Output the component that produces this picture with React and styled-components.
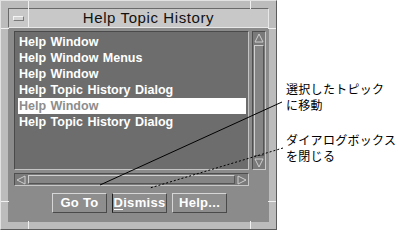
import React from "react";
import styled, { createGlobalStyle } from "styled-components";

const Global = createGlobalStyle`
  html, body { margin: 0; padding: 0; background: #ffffff; }
  body { font-family: "Liberation Sans", Arial, sans-serif; }
`;

const Page = styled.div`
  position: relative;
  width: 399px;
  height: 230px;
  display: flex;
  align-items: flex-start;
  overflow: hidden;
`;

const Window = styled.div`
  position: relative;
  box-sizing: border-box;
  width: 277px;
  height: 230px;
  flex: none;
  padding: 7px;
  background: #bcbcbc;
  border: 1px solid;
  border-color: #e2e2e2 #5c5c5c #5c5c5c #e2e2e2;
  display: flex;
  flex-direction: column;
`;

const Tick = styled.div`
  position: absolute;
  background: #f0f0f0;
  ${(p) => (p.$v ? "width: 1px; height: 8px;" : "width: 8px; height: 1px;")}
`;

const TitleBar = styled.div`
  height: 20px;
  display: flex;
  background: #c8c8c8;
  border: 1px solid;
  border-color: #6a6a6a #e8e8e8 #e8e8e8 #6a6a6a;
  box-sizing: border-box;
`;

const MenuButton = styled.div`
  width: 19px;
  flex: none;
  display: flex;
  align-items: center;
  justify-content: center;
  border-right: 1px solid #efefef;
  &::after {
    content: "";
    width: 9px;
    height: 3px;
    background: #d4d4d4;
    border: 1px solid;
    border-color: #f4f4f4 #7a7a7a #7a7a7a #f4f4f4;
  }
`;

const Title = styled.div`
  flex: 1;
  text-align: center;
  font-size: 15px;
  line-height: 18px;
  color: #111;
  letter-spacing: 0.6px;
`;

const Body = styled.div`
  flex: 1;
  background: #8b8b8b;
  box-sizing: border-box;
  padding: 3px 0 0 6px;
  display: flex;
  flex-direction: column;
`;

const ScrollGrid = styled.div`
  display: grid;
  grid-template-columns: 235px 14px;
  grid-template-rows: 139px 13px;
  column-gap: 3px;
  row-gap: 3px;
`;

const List = styled.ul`
  margin: 0;
  padding: 2px 2px 0 3px;
  list-style: none;
  background: #6d6d6d;
  border: 1px solid;
  border-color: #4a4a4a #c4c4c4 #c4c4c4 #4a4a4a;
  box-sizing: border-box;
  overflow: hidden;
`;

const Item = styled.li`
  height: 16px;
  line-height: 16px;
  font-size: 12.5px;
  font-weight: bold;
  word-spacing: 1px;
  padding-left: 1px;
  white-space: nowrap;
  color: ${(p) => (p.$selected ? "#8d8d8d" : "#ffffff")};
  background: ${(p) => (p.$selected ? "#ffffff" : "transparent")};
`;

const VTrack = styled.div`
  background: #7a7a7a;
  border: 1px solid;
  border-color: #4f4f4f #c8c8c8 #c8c8c8 #4f4f4f;
  box-sizing: border-box;
  display: flex;
  flex-direction: column;
`;

const HTrack = styled(VTrack)`
  flex-direction: row;
  grid-column: 1;
`;

const Arrow = styled.div`
  flex: none;
  width: ${(p) => (p.$h ? "12px" : "auto")};
  height: ${(p) => (p.$h ? "auto" : "12px")};
  display: flex;
  align-items: center;
  justify-content: center;
`;

const Thumb = styled.div`
  flex: 1;
  margin: 1px;
  background: #858585;
  border: 1px solid;
  border-color: #d0d0d0 #555 #555 #d0d0d0;
`;

const ButtonRow = styled.div`
  display: flex;
  justify-content: center;
  gap: 5px;
  margin-top: 7px;
  width: 251px;
`;

const Button = styled.div`
  width: 55px;
  height: 20px;
  box-sizing: border-box;
  display: flex;
  align-items: center;
  justify-content: center;
  background: #8e8e8e;
  border: 1px solid;
  border-color: ${(p) =>
    p.$focus ? "#d6d6d6 #4a4a4a #4a4a4a #1e1e1e" : "#d6d6d6 #4a4a4a #4a4a4a #d6d6d6"};
  color: #ffffff;
  font-size: 13px;
  font-weight: bold;
  letter-spacing: 0.3px;
`;

const Label = styled.span`
  line-height: 16px;
  white-space: nowrap;
`;

const Mnemonic = styled.span`
  display: inline-block;
  line-height: 13px;
  border-bottom: 1px solid #ffffff;
`;

const Notes = styled.div`
  flex: 1;
  padding: 81px 0 0 9px;
  display: flex;
  flex-direction: column;
  gap: 19px;
`;

const Note = styled.div`
  font-family: "Noto Sans CJK JP", sans-serif;
  font-size: 12px;
  line-height: 16px;
  letter-spacing: 0.3px;
  color: #000;
  white-space: nowrap;
`;

const Leaders = styled.svg`
  position: absolute;
  left: 0;
  top: 0;
  pointer-events: none;
`;

const Tri = ({ dir }) => {
  const pts = {
    up: "1,9 5,1 9,9",
    down: "1,1 5,9 9,1",
    left: "9,1 1,5 9,9",
    right: "1,1 9,5 1,9",
  }[dir];
  return (
    <svg width="10" height="10" viewBox="0 0 10 10">
      <polygon points={pts} fill="#7a7a7a" stroke="#cfcfcf" strokeWidth="1" />
    </svg>
  );
};

const items = [
  "Help Window",
  "Help Window Menus",
  "Help Window",
  "Help Topic History Dialog",
  "Help Window",
  "Help Topic History Dialog",
];

export default function App() {
  return (
    <>
      <Global />
      <Page>
        <Window>
          <Tick $v style={{ left: 27, top: 0 }} />
          <Tick $v style={{ left: 249, top: 0 }} />
          <Tick $v style={{ left: 27, bottom: 0 }} />
          <Tick $v style={{ left: 249, bottom: 0 }} />
          <Tick style={{ left: 0, top: 27 }} />
          <Tick style={{ right: 0, top: 27 }} />
          <Tick style={{ left: 0, bottom: 27 }} />
          <Tick style={{ right: 0, bottom: 27 }} />
          <TitleBar>
            <MenuButton />
            <Title>Help Topic History</Title>
          </TitleBar>
          <Body>
            <ScrollGrid>
              <List>
                {items.map((t, i) => (
                  <Item key={i} $selected={i === 4}>
                    {t}
                  </Item>
                ))}
              </List>
              <VTrack>
                <Arrow><Tri dir="up" /></Arrow>
                <Thumb />
                <Arrow><Tri dir="down" /></Arrow>
              </VTrack>
              <HTrack>
                <Arrow $h><Tri dir="left" /></Arrow>
                <Thumb />
                <Arrow $h><Tri dir="right" /></Arrow>
              </HTrack>
            </ScrollGrid>
            <ButtonRow>
              <Button>
                <Label>Go To</Label>
              </Button>
              <Button $focus>
                <Label>
                  <Mnemonic>D</Mnemonic>ismiss
                </Label>
              </Button>
              <Button>
                <Label>Help...</Label>
              </Button>
            </ButtonRow>
          </Body>
        </Window>
        <Notes>
          <Note>
            選択したトピック
            <br />
            に移動
          </Note>
          <Note>
            ダイアログボックス
            <br />
            を閉じる
          </Note>
        </Notes>
        <Leaders width="399" height="230" viewBox="0 0 399 230">
          <line x1="282" y1="102" x2="100" y2="185" stroke="#000" strokeWidth="1" />
          <line x1="283" y1="148" x2="150" y2="188" stroke="#000" strokeWidth="1" strokeDasharray="2 2" />
        </Leaders>
      </Page>
    </>
  );
}
